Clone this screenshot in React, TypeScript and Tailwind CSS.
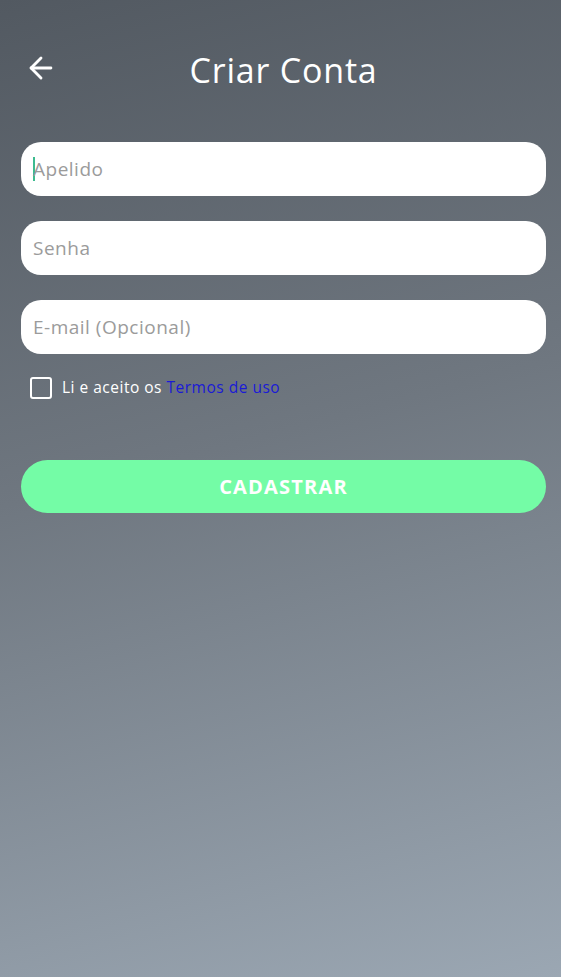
import { ArrowLeft } from "lucide-react";

const FIELDS = ["Apelido", "Senha", "E-mail (Opcional)"];

export default function App() {
  return (
    <div
      className="min-h-[977px] w-full bg-[linear-gradient(165deg,#525961_0%,#6f7780_45%,#9ba7b3_100%)] pl-[21px] pr-[15px] font-['Open_Sans',sans-serif]"
    >
      {/* Header */}
      <div className="relative flex h-[142px] items-center justify-center pb-[2px]">
        <button className="absolute left-[3px] top-[51px] text-white">
          <ArrowLeft className="h-[34px] w-[34px]" strokeWidth={2} />
        </button>
        <h1 className="text-[34px] font-normal tracking-[0.8px] text-white">Criar Conta</h1>
      </div>

      {/* Inputs */}
      <div className="flex flex-col gap-[25px]">
        {FIELDS.map((label, i) => (
          <div
            key={label}
            className="flex h-[54px] items-center rounded-[20px] bg-white px-[12px]"
          >
            {i === 0 && <span className="mr-[-2px] h-[24px] w-[2px] bg-[#3dbb8f]" />}
            <span className="text-[19px] tracking-[0.5px] text-[#9b9b9b]">{label}</span>
          </div>
        ))}
      </div>

      {/* Terms */}
      <div className="mt-[22px] flex items-center gap-[10px] pl-[9px]">
        <span className="h-[22px] w-[22px] rounded-[3px] border-2 border-white" />
        <span className="text-[15.5px] tracking-[0.5px] text-white">
          Li e aceito os <span className="text-[#1a1ad6]">Termos de uso</span>
        </span>
      </div>

      {/* Submit */}
      <button className="mt-[61px] flex h-[53px] w-full items-center justify-center rounded-full bg-[#74fca6] text-[20px] font-bold tracking-[1.2px] text-white">
        CADASTRAR
      </button>
    </div>
  );
}
